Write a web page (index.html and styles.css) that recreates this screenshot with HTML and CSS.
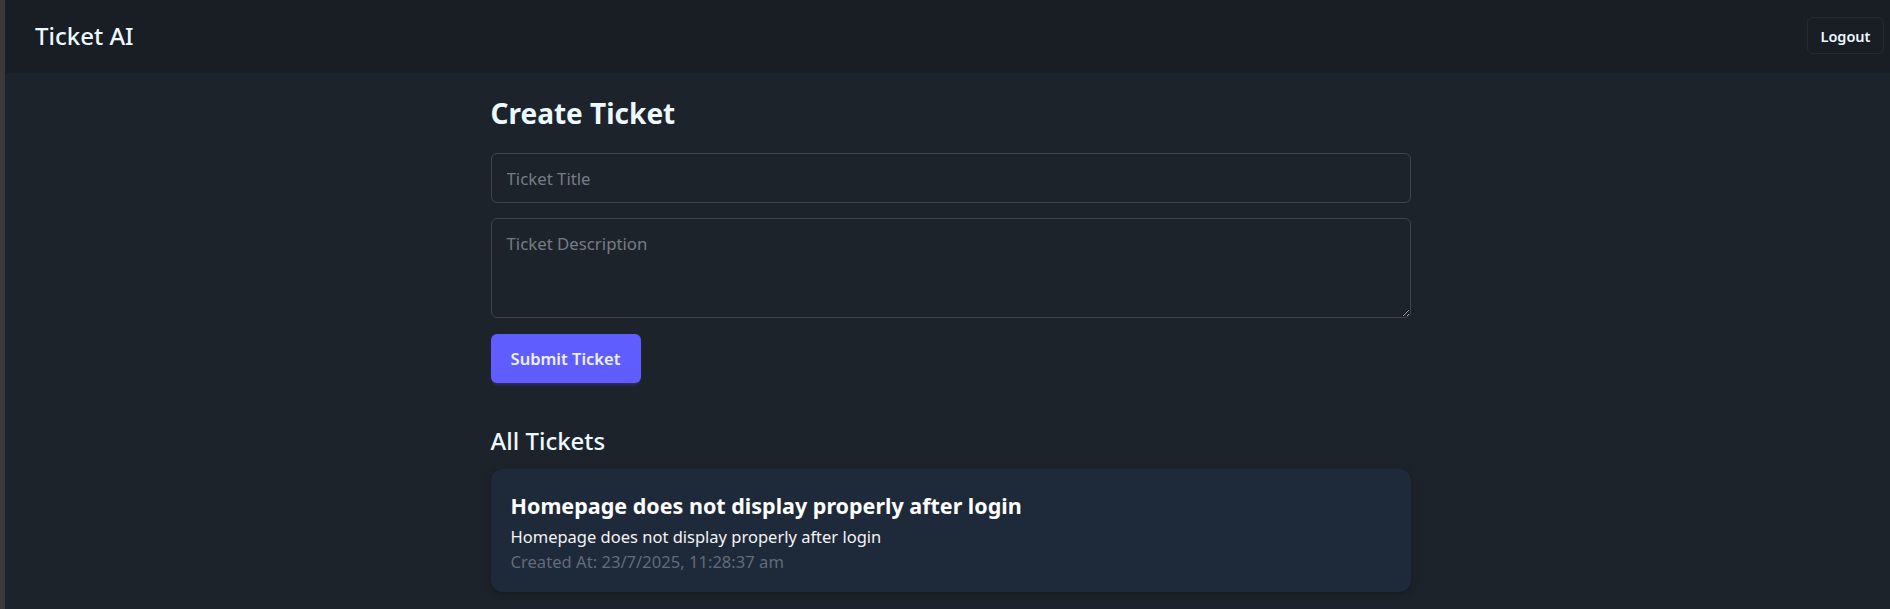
FILE: index.html
```html
<!DOCTYPE html>
<html lang="en">
<head>
<meta charset="utf-8">
<title>Ticket AI</title>
<link rel="stylesheet" href="styles.css">
</head>
<body>
<div class="frame">
  <header class="navbar">
    <a class="brand" href="#">Ticket AI</a>
    <button class="btn-logout" type="button">Logout</button>
  </header>
  <main class="main">
    <div class="container">
      <h2 class="page-title">Create Ticket</h2>
      <form class="ticket-form">
        <input class="field" type="text" placeholder="Ticket Title">
        <textarea class="field field-area" placeholder="Ticket Description"></textarea>
        <button class="btn-submit" type="button">Submit Ticket</button>
      </form>
      <h3 class="section-title">All Tickets</h3>
      <div class="ticket-list">
        <div class="ticket-card">
          <h4 class="ticket-title">Homepage does not display properly after login</h4>
          <p class="ticket-desc">Homepage does not display properly after login</p>
          <p class="ticket-date">Created At: 23/7/2025, 11:28:37 am</p>
        </div>
      </div>
    </div>
  </main>
</div>
</body>
</html>
```

FILE: styles.css
```css
* { box-sizing: border-box; }
html, body { margin: 0; padding: 0; height: 100%; }
body {
  background: #1d232a;
  font-family: "Noto Sans", "Open Sans", sans-serif;
  color: #ecf9ff;
  overflow: hidden;
}
.frame {
  min-height: 100%;
  border-left: 5px solid #3a3a3a;
}
.navbar {
  height: 73px;
  background: #191e24;
  display: flex;
  align-items: center;
  justify-content: space-between;
  padding: 0 6px 0 10px;
}
.brand {
  color: #ecf9ff;
  text-decoration: none;
  font-size: 24px;
  font-weight: 500;
  padding: 0 20px;
  line-height: 40px;
  margin-top: -2px;
}
.btn-logout {
  height: 37px;
  width: 77px;
  background: #191e24;
  border: 1px solid #262b32;
  border-radius: 6px;
  color: #ecf9ff;
  font-family: inherit;
  font-size: 14.5px;
  font-weight: 600;
  margin-top: -2px;
}
.main { padding-left: 6px; }
.container {
  max-width: 960px;
  margin: 0 auto;
  padding: 20px;
}
.page-title {
  margin: 0 0 20px;
  font-size: 28px;
  line-height: 40px;
  font-weight: 700;
}
.ticket-form {
  display: flex;
  flex-direction: column;
  align-items: flex-start;
}
.field {
  width: 100%;
  height: 50px;
  background: #1d232a;
  border: 1px solid #3e444c;
  border-radius: 6px;
  padding: 0 15px;
  color: #ecf9ff;
  font-family: inherit;
  font-size: 16.8px;
  outline: none;
}
.field::placeholder { color: #767c85; }
.field-area {
  margin-top: 15px;
  height: 100px;
  padding: 11px 15px;
  line-height: 27px;
  resize: vertical;
}
.btn-submit {
  margin-top: 16px;
  width: 150px;
  height: 49px;
  background: #605dff;
  border: none;
  border-radius: 6px;
  color: #edf1fe;
  font-family: inherit;
  font-size: 16.5px;
  font-weight: 600;
  box-shadow: 0 3px 3px -1px rgba(70, 60, 200, 0.45);
}
.section-title {
  margin: 40px 0 11px;
  font-size: 24px;
  line-height: 35px;
  font-weight: 500;
}
.ticket-card {
  background: #1e2939;
  border-radius: 12px;
  padding: 22px 20px 18px;
  box-shadow: 0 2px 6px rgba(0, 0, 0, 0.25);
}
.ticket-title {
  margin: 0;
  font-size: 21.5px;
  line-height: 30px;
  font-weight: 700;
  color: #ffffff;
}
.ticket-desc {
  margin: 3px 0 0;
  font-size: 16.5px;
  line-height: 25px;
  color: #f3f4f6;
}
.ticket-date {
  margin: 0;
  font-size: 16.6px;
  line-height: 25px;
  color: #636b79;
}
```
